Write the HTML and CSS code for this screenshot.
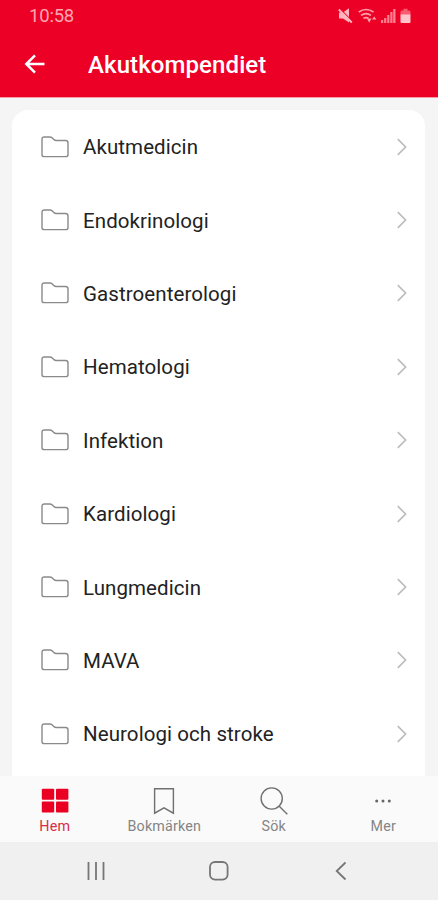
FILE: index.html
```html
<!DOCTYPE html>
<html lang="sv">
<head>
<meta charset="utf-8">
<title>Akutkompendiet</title>
<link rel="stylesheet" href="styles.css">
</head>
<body>
<svg width="0" height="0" class="defs">
  <symbol id="folder" viewBox="0 0 30 24"><path d="M2 19.700V4.400Q2 2 4.400 2H9.800Q11.300 2 12.300 3L13.800 4.500Q14.800 5.500 16.300 5.500H25.600Q28 5.500 28 7.900V19.700Q28 21.600 25.600 21.600H4.400Q2 21.600 2 19.700Z"/></symbol>
  <symbol id="chevron" viewBox="0 0 12 20"><path d="M1.800 2.200 9.600 10 1.800 17.800"/></symbol>
</svg>
<div class="app">
  <header class="header">
    <div class="status">
      <span class="time">10:58</span>
      <div class="status-icons">
        <svg width="16" height="17" viewBox="0 0 16 17"><path d="M1 4.500H5L11 .3V14.500L5 10.500H1Z" fill="#ffb5bd"/><path d="M2 .8 15.500 14.300" stroke="#ed0025" stroke-width="1.200"/><path d="M.8 1.500 13.800 14.500" stroke="#ffb5bd" stroke-width="1.900"/></svg>
        <svg width="19" height="17" viewBox="0 0 19 17" fill="none" stroke="#ffa0ad" stroke-width="1.700"><path d="M.8 4Q8 -1 15.500 4M3 7.400Q8 4 13 7.400M5.500 10.300Q8 8.800 10.500 10.300"/><path d="M9 10.500H13.500L11.200 14.800ZM14 11.500 16.200 8.500 18.400 11.500Z" fill="#ffa0ad" stroke="none"/></svg>
        <svg width="15" height="17" viewBox="0 0 15 17" fill="#ff8090"><path d="M0 12H2.200V15H0ZM3.100 10H5.300V15H3.100ZM6.200 7H8.400V15H6.200ZM9.300 4H11.500V15H9.300ZM12.200 1H14.500V15H12.200Z"/></svg>
        <svg width="11" height="17" viewBox="0 0 11 17"><path d="M3.500 .8H7.500V2.500H9Q10.500 2.500 10.500 4V7H.5V4Q.5 2.500 2 2.500H3.500Z" fill="#f85c70"/><path d="M.5 6.500H10.500V14Q10.500 15 9.500 15H1.500Q.5 15 .5 14Z" fill="#ffc5cb"/></svg>
      </div>
    </div>
    <div class="toolbar">
      <svg class="back" width="22" height="22" viewBox="0 0 22 22"><path d="M20.500 10H2.500M11 1.300 2.300 10 11 18.700"/></svg>
      <h1>Akutkompendiet</h1>
    </div>
  </header>
  <main class="content">
    <ul class="card">
      <li><svg class="folder"><use href="#folder"/></svg><span>Akutmedicin</span><svg class="chev"><use href="#chevron"/></svg></li>
      <li><svg class="folder"><use href="#folder"/></svg><span>Endokrinologi</span><svg class="chev"><use href="#chevron"/></svg></li>
      <li><svg class="folder"><use href="#folder"/></svg><span>Gastroenterologi</span><svg class="chev"><use href="#chevron"/></svg></li>
      <li><svg class="folder"><use href="#folder"/></svg><span>Hematologi</span><svg class="chev"><use href="#chevron"/></svg></li>
      <li><svg class="folder"><use href="#folder"/></svg><span>Infektion</span><svg class="chev"><use href="#chevron"/></svg></li>
      <li><svg class="folder"><use href="#folder"/></svg><span>Kardiologi</span><svg class="chev"><use href="#chevron"/></svg></li>
      <li><svg class="folder"><use href="#folder"/></svg><span>Lungmedicin</span><svg class="chev"><use href="#chevron"/></svg></li>
      <li><svg class="folder"><use href="#folder"/></svg><span>MAVA</span><svg class="chev"><use href="#chevron"/></svg></li>
      <li><svg class="folder"><use href="#folder"/></svg><span>Neurologi och stroke</span><svg class="chev"><use href="#chevron"/></svg></li>
    </ul>
  </main>
  <nav class="tabs">
    <a class="tab active"><svg width="30" height="30" viewBox="0 0 30 30"><rect x="1.800" y="2.800" width="12.400" height="11" rx="1"/><rect x="16" y="2.800" width="12.400" height="11" rx="1"/><rect x="1.800" y="15.600" width="12.400" height="11" rx="1"/><rect x="16" y="15.600" width="12.400" height="11" rx="1"/></svg><span>Hem</span></a>
    <a class="tab"><svg width="30" height="30" viewBox="0 0 30 30"><path d="M5.600 2.700H24.400V27.200L15 21.800 5.600 27.200Z"/></svg><span>Bokmärken</span></a>
    <a class="tab"><svg width="30" height="30" viewBox="0 0 30 30"><circle cx="12.700" cy="12.500" r="10.600"/><path d="M20 20 28.300 28.300"/></svg><span>Sök</span></a>
    <a class="tab"><svg width="30" height="30" viewBox="0 0 30 30"><g fill="#666" stroke="none"><circle cx="8.700" cy="15" r="1.500"/><circle cx="15" cy="15" r="1.500"/><circle cx="21.300" cy="15" r="1.500"/></g></svg><span>Mer</span></a>
  </nav>
  <div class="system">
    <svg width="20" height="20" viewBox="0 0 20 20"><path d="M2.500 1V19M10 1V19M17.500 1V19"/></svg>
    <svg width="20" height="20" viewBox="0 0 20 20"><rect x="1" y="1" width="17.600" height="17.600" rx="5"/></svg>
    <svg width="20" height="20" viewBox="0 0 20 20"><path d="M13.500 1.500 4.700 10 13.500 18.500"/></svg>
  </div>
</div>
</body>
</html>
```
FILE: styles.css
```css
* { box-sizing: border-box; }
body { margin: 0; font-family: Roboto, "Liberation Sans", sans-serif; }
svg { flex: none; display: block; }
.defs { position: absolute; }
.app { width: 438px; height: 900px; display: flex; flex-direction: column; overflow: hidden; background: #f5f5f5; }
.header { flex: none; height: 98px; background: #ed0025; border-bottom: 1px solid #f29ca4; }
.status { height: 32px; display: flex; align-items: center; justify-content: space-between; padding: 0 27px 0 29px; }
.time { font-size: 18.5px; line-height: 20px; padding-bottom: 1px; color: #ffa6b1; letter-spacing: -.2px; }
.status-icons { display: flex; gap: 4px; margin-top: 1px; }
.toolbar { height: 65px; display: flex; align-items: center; padding-left: 24px; }
.back { fill: none; stroke: #fff; stroke-width: 2.5; }
h1 { margin: 0 0 0 42px; font-size: 24px; line-height: 28px; font-weight: 500; color: #fff; letter-spacing: .1px; }
.content { flex: none; height: 678px; padding: 12px 13px 0 12px; overflow: hidden; }
.card { height: 690px; margin: 0; padding: 0; list-style: none; background: #fff; border-radius: 16px; }
.card li { height: 73.4px; display: flex; align-items: center; padding: 0 17px 0 28px; font-size: 20.5px; color: #222; letter-spacing: .08px; }
.card span { flex: 1; padding-top: 1px; }
.folder { width: 30px; height: 24px; margin-right: 13px; fill: none; stroke: #8a8a8a; stroke-width: 1.4; }
.chev { width: 12px; height: 20px; fill: none; stroke: #bdbdbd; stroke-width: 1.7; }
.tabs { flex: none; height: 66px; display: grid; grid-template-columns: repeat(4, 1fr); background: #fafafa; }
.tab { display: flex; flex-direction: column; align-items: center; padding-top: 10px; font-size: 14.3px; line-height: 20px; letter-spacing: .15px; color: #858585; }
.tab svg { fill: none; stroke: #707070; stroke-width: 1.4; }
.tab.active { color: #d92c43; }
.tab.active svg { fill: #e90023; stroke: none; }
.system { flex: none; height: 58px; display: flex; align-items: center; justify-content: space-between; padding: 0 86px; background: #f0f0f0; }
.system svg { fill: none; stroke: #767676; stroke-width: 1.8; }
```
